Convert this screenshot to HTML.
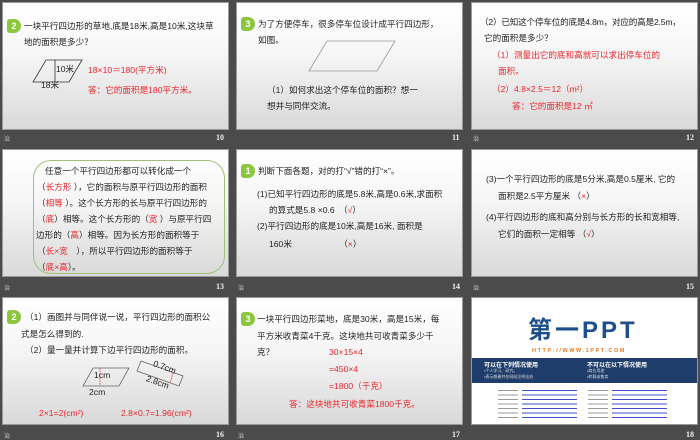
<!DOCTYPE html>
<html><head><meta charset="utf-8"><style>
*{margin:0;padding:0;box-sizing:border-box}
body{width:700px;height:438px;background:#4b4b4b;position:relative;overflow:hidden;font-family:"Liberation Sans","Noto Sans CJK SC",sans-serif;font-size:8.6px;color:#222}
.s{position:absolute;width:227px;height:128px;background:linear-gradient(#fff 0%,#f6f6f6 40%,#d9d9d9 100%);border:1px solid #9a9a9a;overflow:hidden}
.a{position:absolute;white-space:nowrap;line-height:14px}
.r{color:#e8262b}
.b{position:absolute;left:4px;width:14px;height:14px;background:#8cc63f;color:#fff;font-weight:bold;font-size:9px;text-align:center;line-height:14px;border-radius:3px 7px 7px 3px}
.n{position:absolute;color:#eee;font-size:8px;font-weight:bold;font-family:"Liberation Serif",serif}
.m{position:absolute;color:#ccc;font-size:6px}
</style></head><body>
<!-- row1 -->
<div class="s" style="left:2px;top:2px">
<div class="b" style="top:16px">2</div>
<div class="a" style="left:21px;top:16px">一块平行四边形的草地,底是18米,高是10米,这块草</div>
<div class="a" style="left:21px;top:32px">地的面积是多少？</div>
<svg style="position:absolute;left:28px;top:55px" width="55" height="30"><polygon points="2,24 15,2 51,2 38,24" fill="none" stroke="#333" stroke-width="0.8"/><line x1="24" y1="2" x2="24" y2="24" stroke="#333" stroke-width="0.8"/></svg>
<div class="a" style="left:53px;top:59px">10米</div>
<div class="a" style="left:38px;top:75px">18米</div>
<div class="a r" style="left:85px;top:60px">18×10＝180(平方米)</div>
<div class="a r" style="left:85px;top:80px">答：它的面积是180平方米。</div>
</div>
<div class="s" style="left:236px;top:2px">
<div class="b" style="top:14px">3</div>
<div class="a" style="left:21px;top:14px">为了方便停车，很多停车位设计成平行四边形，</div>
<div class="a" style="left:21px;top:30px">如图。</div>
<svg style="position:absolute;left:70px;top:36px" width="90" height="35"><polygon points="2,32 20,2 88,2 70,32" fill="none" stroke="#999" stroke-width="0.8"/></svg>
<div class="a" style="left:30px;top:80px">（1）如何求出这个停车位的面积？想一</div>
<div class="a" style="left:30px;top:96px">想并与同伴交流。</div>
</div>
<div class="s" style="left:471px;top:2px">
<div class="a" style="left:8px;top:12px;letter-spacing:-0.2px">（2）已知这个停车位的底是4.8m，对应的高是2.5m，</div>
<div class="a" style="left:12px;top:28px">它的面积是多少？</div>
<div class="a r" style="left:20px;top:45px">（1）测量出它的底和高就可以求出停车位的</div>
<div class="a r" style="left:26px;top:61px">面积。</div>
<div class="a r" style="left:20px;top:79px">（2）4.8×2.5＝12（m²）</div>
<div class="a r" style="left:40px;top:96px">答：它的面积是12 ㎡</div>
</div>
<div class="m" style="left:4px;top:134px">治</div><div class="n" style="left:216px;top:133px">10</div>
<div class="n" style="left:452px;top:133px">11</div>
<div class="m" style="left:473px;top:134px">治</div><div class="n" style="left:686px;top:133px">12</div>
<!-- row2 -->
<div class="s" style="left:2px;top:149px">
<div style="position:absolute;left:30px;top:10px;width:192px;height:114px;border:1px solid #9cc27a;border-radius:18px"></div>
<div class="a" style="left:42px;top:14px">任意一个平行四边形都可以转化成一个</div>
<div class="a" style="left:34px;top:30px">（<span class="r">长方形</span> ），它的面积与原平行四边形的面积</div>
<div class="a" style="left:34px;top:46px">（<span class="r">相等</span> ）。这个长方形的长与原平行四边形的</div>
<div class="a" style="left:34px;top:62px">（<span class="r">底</span>）相等。这个长方形的（<span class="r">宽</span> ）与原平行四</div>
<div class="a" style="left:33px;top:78px">边形的（<span class="r">高</span>）相等。因为长方形的面积等于</div>
<div class="a" style="left:34px;top:94px">（<span class="r">长×宽</span>　），所以平行四边形的面积等于</div>
<div class="a" style="left:34px;top:110px">（<span class="r">底×高</span>）。</div>
</div>
<div class="s" style="left:236px;top:149px">
<div class="b" style="top:14px">1</div>
<div class="a" style="left:21px;top:14px">判断下面各题，对的打“√”错的打“×”。</div>
<div class="a" style="left:20px;top:37px">(1)已知平行四边形的底是5.8米,高是0.6米,求面积</div>
<div class="a" style="left:32px;top:53px">的算式是5.8 ×0.6　（<span class="r">√</span>）</div>
<div class="a" style="left:20px;top:69px">(2)平行四边形的底是10米,高是16米, 面积是</div>
<div class="a" style="left:32px;top:87px">160米　　　　　　（<span class="r">×</span>）</div>
</div>
<div class="s" style="left:471px;top:149px">
<div class="a" style="left:14px;top:22px">(3)一个平行四边形的底是5分米,高是0.5厘米, 它的</div>
<div class="a" style="left:26px;top:39px">面积是2.5平方厘米 （<span class="r">×</span>）</div>
<div class="a" style="left:14px;top:60px">(4)平行四边形的底和高分别与长方形的长和宽相等,</div>
<div class="a" style="left:26px;top:77px">它们的面积一定相等 （<span class="r">√</span>）</div>
</div>
<div class="m" style="left:4px;top:283px">治</div><div class="n" style="left:216px;top:282px">13</div>
<div class="m" style="left:238px;top:283px">治</div><div class="n" style="left:452px;top:282px">14</div>
<div class="m" style="left:473px;top:283px">治</div><div class="n" style="left:686px;top:282px">15</div>
<!-- row3 -->
<div class="s" style="left:2px;top:297px">
<div class="b" style="top:12px">2</div>
<div class="a" style="left:22px;top:12px">（1）画图并与同伴说一说，平行四边形的面积公</div>
<div class="a" style="left:18px;top:29px">式是怎么得到的.</div>
<div class="a" style="left:22px;top:45px">（2）量一量并计算下边平行四边形的面积。</div>
<svg style="position:absolute;left:78px;top:60px" width="105" height="45"><polygon points="2,28 12,10 48,10 38,28" fill="none" stroke="#666" stroke-width="0.8"/><line x1="19" y1="10" x2="19" y2="28" stroke="#e8262b" stroke-dasharray="1.5,1" stroke-width="0.8"/><polygon points="60,3 102,18 98,28 56,13" fill="none" stroke="#666" stroke-width="0.8"/><line x1="92" y1="15" x2="89" y2="25" stroke="#e8262b" stroke-dasharray="1.5,1" stroke-width="0.8"/></svg>
<div class="a" style="left:91px;top:70px">1cm</div>
<div class="a" style="left:86px;top:87px">2cm</div>
<div class="a" style="left:150px;top:62px;transform:rotate(20deg)">0.7cm</div>
<div class="a" style="left:143px;top:77px;transform:rotate(20deg)">2.8cm</div>
<div class="a r" style="left:36px;top:108px">2×1=2(cm²)</div>
<div class="a r" style="left:118px;top:108px">2.8×0.7=1.96(cm²)</div>
</div>
<div class="s" style="left:236px;top:297px">
<div class="b" style="top:14px">3</div>
<div class="a" style="left:20px;top:14px">一块平行四边形菜地，底是30米，高是15米，每</div>
<div class="a" style="left:20px;top:31px">平方米收青菜4千克。这块地共可收青菜多少千</div>
<div class="a" style="left:20px;top:47px">克？</div>
<div class="a r" style="left:92px;top:47px">30×15×4</div>
<div class="a r" style="left:92px;top:64px">=450×4</div>
<div class="a r" style="left:92px;top:81px">=1800（千克）</div>
<div class="a r" style="left:52px;top:99px">答：这块地共可收青菜1800千克。</div>
</div>
<div class="s" style="left:471px;top:297px;background:#fff">
<div class="a" style="left:56px;top:20px;font-size:24px;font-weight:bold;color:#1d4f8c;line-height:26px;letter-spacing:3px">第一PPT</div>
<div class="a" style="left:60px;top:46px;font-size:5.5px;font-weight:bold;color:#e87a2a;letter-spacing:1.6px">HTTP://WWW.1PPT.COM</div>
<div style="position:absolute;left:0;top:60px;width:227px;height:25px;background:#1e3d6b"></div>
<div class="a" style="left:12px;top:61px;font-size:6px;color:#fff;font-weight:bold">可以在下列情况使用</div>
<div class="a" style="left:115px;top:61px;font-size:6px;color:#fff;font-weight:bold">不可以在以下情况使用</div>
<div class="a" style="left:12px;top:70px;font-size:4px;color:#ddd;line-height:6px">•个人学习、研究。<br>•表示感谢并在网站注明出处</div>
<div class="a" style="left:115px;top:70px;font-size:4px;color:#ddd;line-height:6px">•商业用途<br>•转载或售卖</div>
<div style="position:absolute;left:50px;top:90px;width:55px;height:33px;background:repeating-linear-gradient(#fff 0,#fff 2px,#3d4fd0 2px,#3d4fd0 3px,#fff 3px,#fff 4.5px)"></div>
<div style="position:absolute;left:140px;top:90px;width:55px;height:33px;background:repeating-linear-gradient(#fff 0,#fff 2px,#3d4fd0 2px,#3d4fd0 3px,#fff 3px,#fff 4.5px)"></div>
<div style="position:absolute;left:26px;top:90px;width:20px;height:33px;background:repeating-linear-gradient(#fff 0,#fff 2px,#999 2px,#999 3px,#fff 3px,#fff 4.5px)"></div>
<div style="position:absolute;left:116px;top:90px;width:20px;height:33px;background:repeating-linear-gradient(#fff 0,#fff 2px,#999 2px,#999 3px,#fff 3px,#fff 4.5px)"></div>
</div>
<div class="m" style="left:4px;top:431px">治</div><div class="n" style="left:216px;top:430px">16</div>
<div class="m" style="left:238px;top:431px">治</div><div class="n" style="left:452px;top:430px">17</div>
<div class="n" style="left:686px;top:430px">18</div>
</body></html>
